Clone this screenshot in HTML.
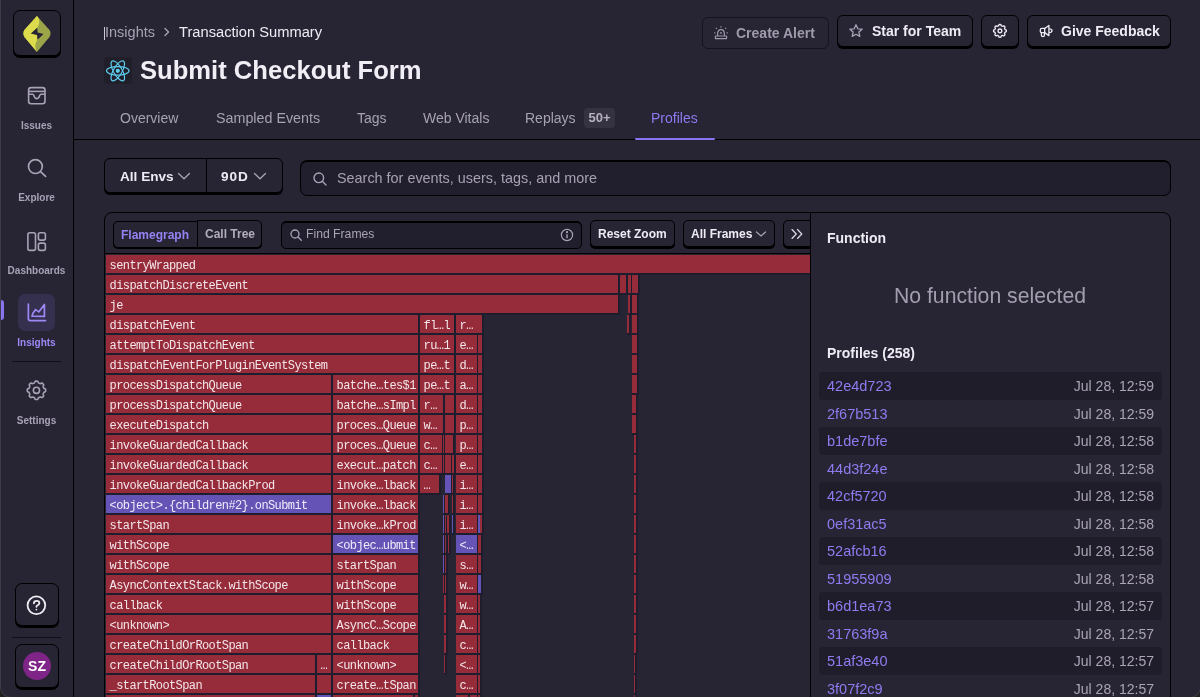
<!DOCTYPE html>
<html><head><meta charset="utf-8">
<style>
*{box-sizing:border-box;margin:0;padding:0}
html,body{width:1200px;height:697px;overflow:hidden;background:#1f221e}
body{font-family:"Liberation Sans",sans-serif;color:#efebf4;position:relative}
#win{position:absolute;left:0;top:0;width:1201px;height:698px;background:#272433;border-radius:0 0 11px 11px;overflow:hidden;will-change:transform}
#wedge{position:absolute;left:0;top:0;width:1201px;height:698px;border-radius:0 0 11px 11px;border:1px solid #3d3b48;border-top:0;pointer-events:none;z-index:50}
.a{position:absolute;white-space:nowrap}
#sideline{position:absolute;left:73px;top:0;width:1px;height:697px;background:#000}
.hline{position:absolute;left:74px;top:139px;width:1126px;height:1px;background:#000}
.sbtn{position:absolute;border:1px solid #000;border-radius:7px;background:#272433;box-shadow:0 2px 0 #000}
.lbl{position:absolute;font-weight:bold;font-size:10px;color:#a8a2b7;text-align:center;width:73px;left:0;white-space:nowrap;line-height:12px}
.tab{position:absolute;top:110px;font-size:14px;line-height:16px;color:#a7a1b4;white-space:nowrap}
.hbtn{position:absolute;border:1px solid #000;border-radius:6px;background:#272433;box-shadow:0 2px 0 #000;font-weight:bold;font-size:14px;line-height:16px;color:#efebf4;white-space:nowrap}
.tbtn{position:absolute;border:1px solid #000;border-radius:5px;background:#272433;box-shadow:0 2px 0 #000;font-weight:bold;font-size:12px;line-height:14px;color:#efebf4;white-space:nowrap}
#flame{position:absolute;left:0;top:0;width:1200px;height:697px;overflow:hidden;clip-path:inset(254px 390px 0 105px)}
.fr,.fp{position:absolute;height:20px;background:#1e1d2e;background-clip:border-box;overflow:hidden}
.fr{font-family:"Liberation Mono",monospace;font-size:12px;letter-spacing:-0.6px;line-height:18px;color:#f3e6ea}
.fp{font-family:"Liberation Mono",monospace;font-size:12px;letter-spacing:-0.6px;line-height:18px;color:#f0ecfb}
.fr::before,.fp::before{content:"";position:absolute;left:0;top:0;right:1.5px;bottom:2px;background:#962b39;z-index:0}
.fp::before{background:#6553b5}
.fl{position:relative;z-index:1;padding-left:3.6px;top:2px}
.prow{position:absolute;left:819px;width:343px;height:27.5px;border-radius:4px}
.prow.alt{background:#201d2b}
.pid{position:absolute;left:8px;top:6px;font-size:14.5px;line-height:16px;color:#8e7cf0}
.pdt{position:absolute;right:8px;top:6px;font-size:14px;line-height:16px;color:#aaa4b6}
</style></head><body>
<div id="win">
  <!-- SIDEBAR -->
  <div id="sideline"></div>
  <div class="sbtn" style="left:13px;top:10px;width:48px;height:46px"></div>
  <svg class="a" style="left:20px;top:14px" width="34" height="40" viewBox="0 0 34 40">
    <path d="M16.9 2 L29.3 15.8 Q31.8 19.5 29.3 23.2 L16.9 37.9 L4.6 23.2 Q2.1 19.5 4.6 15.8 Z" fill="#9ca548"/>
    <path d="M16.9 2 L4.6 15.8 Q2.1 19.5 4.6 23.2 L16.9 37.9 C15.4 35.8 14.9 31.5 15.6 29.5 C16 28 16.8 26.8 17.5 25.8 L17.1 21 L10.9 19.5 L17.2 13.8 C18.6 11.6 19.4 9.2 19.2 6.4 C19 4.8 18.2 3.4 16.9 2 Z" fill="#dcdb4c"/>
    <path d="M10.9 19.5 L17.2 13.8 L17.6 18.6 L23.5 20.1 L17.5 25.8 L17.1 21 Z" fill="#272433"/>
  </svg>
  <!-- issues -->
  <svg class="a" style="left:26px;top:85px" width="22" height="22" viewBox="0 0 22 22" fill="none" stroke="#a8a2b7" stroke-width="1.6">
    <rect x="2.6" y="2.6" width="16.4" height="16.2" rx="2.5"/>
    <path d="M2.6 6.4 H19"/>
    <path d="M2.6 9.2 H6.5 Q7.5 9.3 8 10.8 Q8.8 13.6 10.8 13.6 Q12.8 13.6 13.6 10.8 Q14.1 9.3 15.1 9.2 H19"/>
  </svg>
  <div class="lbl" style="top:120px">Issues</div>
  <!-- explore -->
  <svg class="a" style="left:25px;top:156px" width="24" height="24" viewBox="0 0 24 24" fill="none" stroke="#a8a2b7" stroke-width="1.7" stroke-linecap="round">
    <circle cx="10.4" cy="10.6" r="6.9"/>
    <path d="M15.5 15.7 L20.6 20.4"/>
  </svg>
  <div class="lbl" style="top:192px">Explore</div>
  <!-- dashboards -->
  <svg class="a" style="left:25px;top:230px" width="24" height="24" viewBox="0 0 24 24" fill="none" stroke="#a8a2b7" stroke-width="1.6">
    <rect x="2.9" y="2.8" width="7.6" height="17.6" rx="1.8"/>
    <rect x="13.4" y="2.8" width="7" height="7.3" rx="1.8"/>
    <rect x="13.4" y="13.1" width="7" height="7.3" rx="1.8"/>
  </svg>
  <div class="lbl" style="top:265px">Dashboards</div>
  <!-- insights active -->
  <div class="a" style="left:0;top:300px;width:4px;height:20px;background:#8a73f0;border-radius:0 3px 3px 0"></div>
  <div class="a" style="left:18px;top:294px;width:37px;height:37px;background:#36304f;border-radius:7px"></div>
  <svg class="a" style="left:25px;top:301px" width="24" height="24" viewBox="0 0 24 24" fill="none" stroke="#9d88f5" stroke-width="1.7" stroke-linejoin="round" stroke-linecap="round">
    <path d="M3.35 3 V17.4 Q3.35 19.6 5.55 19.6 H20.5"/>
    <path d="M7 15.2 L7.9 12.2 L10.6 8.6 L13.8 10.9 L19.4 3.4 V15.4 Z"/>
  </svg>
  <div class="lbl" style="top:337px;color:#9d88f5">Insights</div>
  <div class="a" style="left:12px;top:361px;width:49px;height:1px;background:#120c22"></div>
  <!-- settings -->
  <svg class="a" style="left:25px;top:379px" width="24" height="24" viewBox="0 0 24 24" fill="none" stroke="#a8a2b7" stroke-width="1.6" stroke-linejoin="round">
    <path d="M11.45 2.10 L11.69 2.10 L11.93 2.12 L12.17 2.15 L12.41 2.19 L12.64 2.29 L12.85 2.48 L13.02 2.84 L13.15 3.29 L13.29 3.64 L13.45 3.85 L13.62 3.97 L13.80 4.06 L13.99 4.13 L14.17 4.20 L14.36 4.28 L14.54 4.36 L14.72 4.44 L14.91 4.51 L15.10 4.58 L15.31 4.62 L15.56 4.59 L15.91 4.43 L16.33 4.21 L16.70 4.08 L16.98 4.09 L17.21 4.18 L17.41 4.32 L17.60 4.47 L17.78 4.63 L17.96 4.79 L18.12 4.97 L18.28 5.15 L18.43 5.34 L18.57 5.54 L18.66 5.77 L18.67 6.05 L18.54 6.42 L18.32 6.84 L18.16 7.19 L18.13 7.44 L18.17 7.65 L18.24 7.84 L18.31 8.03 L18.39 8.21 L18.47 8.39 L18.55 8.58 L18.62 8.76 L18.69 8.95 L18.78 9.13 L18.90 9.30 L19.11 9.46 L19.46 9.60 L19.91 9.73 L20.27 9.90 L20.46 10.11 L20.56 10.34 L20.60 10.58 L20.63 10.82 L20.65 11.06 L20.65 11.30 L20.65 11.54 L20.63 11.78 L20.60 12.02 L20.56 12.26 L20.46 12.49 L20.27 12.70 L19.91 12.87 L19.46 13.00 L19.11 13.14 L18.90 13.30 L18.78 13.47 L18.69 13.65 L18.62 13.84 L18.55 14.02 L18.47 14.21 L18.39 14.39 L18.31 14.57 L18.24 14.76 L18.17 14.95 L18.13 15.16 L18.16 15.41 L18.32 15.76 L18.54 16.18 L18.67 16.55 L18.66 16.83 L18.57 17.06 L18.43 17.26 L18.28 17.45 L18.12 17.63 L17.96 17.81 L17.78 17.97 L17.60 18.13 L17.41 18.28 L17.21 18.42 L16.98 18.51 L16.70 18.52 L16.33 18.39 L15.91 18.17 L15.56 18.01 L15.31 17.98 L15.10 18.02 L14.91 18.09 L14.72 18.16 L14.54 18.24 L14.36 18.32 L14.17 18.40 L13.99 18.47 L13.80 18.54 L13.62 18.63 L13.45 18.75 L13.29 18.96 L13.15 19.31 L13.02 19.76 L12.85 20.12 L12.64 20.31 L12.41 20.41 L12.17 20.45 L11.93 20.48 L11.69 20.50 L11.45 20.50 L11.21 20.50 L10.97 20.48 L10.73 20.45 L10.49 20.41 L10.26 20.31 L10.05 20.12 L9.88 19.76 L9.75 19.31 L9.61 18.96 L9.45 18.75 L9.28 18.63 L9.10 18.54 L8.91 18.47 L8.73 18.40 L8.54 18.32 L8.36 18.24 L8.18 18.16 L7.99 18.09 L7.80 18.02 L7.59 17.98 L7.34 18.01 L6.99 18.17 L6.57 18.39 L6.20 18.52 L5.92 18.51 L5.69 18.42 L5.49 18.28 L5.30 18.13 L5.12 17.97 L4.94 17.81 L4.78 17.63 L4.62 17.45 L4.47 17.26 L4.33 17.06 L4.24 16.83 L4.23 16.55 L4.36 16.18 L4.58 15.76 L4.74 15.41 L4.77 15.16 L4.73 14.95 L4.66 14.76 L4.59 14.57 L4.51 14.39 L4.43 14.21 L4.35 14.02 L4.28 13.84 L4.21 13.65 L4.12 13.47 L4.00 13.30 L3.79 13.14 L3.44 13.00 L2.99 12.87 L2.63 12.70 L2.44 12.49 L2.34 12.26 L2.30 12.02 L2.27 11.78 L2.25 11.54 L2.25 11.30 L2.25 11.06 L2.27 10.82 L2.30 10.58 L2.34 10.34 L2.44 10.11 L2.63 9.90 L2.99 9.73 L3.44 9.60 L3.79 9.46 L4.00 9.30 L4.12 9.13 L4.21 8.95 L4.28 8.76 L4.35 8.58 L4.43 8.39 L4.51 8.21 L4.59 8.03 L4.66 7.84 L4.73 7.65 L4.77 7.44 L4.74 7.19 L4.58 6.84 L4.36 6.42 L4.23 6.05 L4.24 5.77 L4.33 5.54 L4.47 5.34 L4.62 5.15 L4.78 4.97 L4.94 4.79 L5.12 4.63 L5.30 4.47 L5.49 4.32 L5.69 4.18 L5.92 4.09 L6.20 4.08 L6.57 4.21 L6.99 4.43 L7.34 4.59 L7.59 4.62 L7.80 4.58 L7.99 4.51 L8.18 4.44 L8.36 4.36 L8.54 4.28 L8.73 4.20 L8.91 4.13 L9.10 4.06 L9.28 3.97 L9.45 3.85 L9.61 3.64 L9.75 3.29 L9.88 2.84 L10.05 2.48 L10.26 2.29 L10.49 2.19 L10.73 2.15 L10.97 2.12 L11.21 2.10 Z"/>
    <circle cx="11.45" cy="11.3" r="3.1"/>
  </svg>
  <div class="lbl" style="top:415px">Settings</div>
  <!-- help -->
  <div class="sbtn" style="left:15px;top:583px;width:44px;height:43px"></div>
  <svg class="a" style="left:25px;top:594px" width="24" height="24" viewBox="0 0 24 24" fill="none" stroke="#f0ecf4" stroke-width="1.8" stroke-linecap="round">
    <circle cx="11.4" cy="11.3" r="8.85"/>
    <path d="M8.9 9.3 Q8.9 6.8 11.6 6.8 Q14.4 6.8 14.4 9 Q14.4 10.4 12.7 11.2 Q11.4 11.8 11.4 12.8"/>
    <circle cx="11.4" cy="15.6" r="0.9" fill="#f0ecf4" stroke="none"/>
  </svg>
  <div class="a" style="left:12px;top:637px;width:49px;height:1px;background:#120c22"></div>
  <div class="sbtn" style="left:15px;top:644px;width:44px;height:44px"></div>
  <div class="a" style="left:23px;top:652px;width:28px;height:28px;border-radius:50%;background:#7f2588;color:#fff;font-weight:bold;font-size:14px;line-height:29px;text-align:center">SZ</div>

  <!-- HEADER -->
  <div class="a" style="left:104px;top:27px;width:1px;height:13px;background:#cfc9d6"></div>
  <div class="a" style="left:105px;top:24px;font-size:14.5px;line-height:17px;color:#a7a1b4">Insights</div>
  <svg class="a" style="left:161px;top:25px" width="12" height="14" viewBox="0 0 12 14" fill="none" stroke="#a7a1b4" stroke-width="1.4" stroke-linecap="round" stroke-linejoin="round"><path d="M4 3.5 L7.5 7 L4 10.5"/></svg>
  <div class="a" style="left:179px;top:24px;font-size:14.7px;line-height:17px;color:#efebf4">Transaction Summary</div>
  <div class="a" style="left:104px;top:57px;width:28px;height:27px;background:#201f29;border-radius:3px"></div>
  <svg class="a" style="left:104px;top:57px" width="28" height="27" viewBox="0 0 28 27" fill="none" stroke="#5dcdf0" stroke-width="1.15">
    <ellipse cx="13.8" cy="13.85" rx="11.3" ry="4.3"/>
    <ellipse cx="13.8" cy="13.85" rx="11.3" ry="4.3" transform="rotate(60 13.8 13.85)"/>
    <ellipse cx="13.8" cy="13.85" rx="11.3" ry="4.3" transform="rotate(120 13.8 13.85)"/>
    <circle cx="13.8" cy="13.85" r="2.1" fill="#5dcdf0" stroke="none"/>
  </svg>
  <div class="a" style="left:140px;top:55px;font-size:25.6px;line-height:30px;font-weight:bold;color:#f2eef6">Submit Checkout Form</div>

  <!-- header buttons -->
  <div class="a" style="left:702px;top:17px;width:127px;height:32px;border:1px solid #16131e;border-radius:6px"></div>
  <svg class="a" style="left:713px;top:25px" width="16" height="16" viewBox="0 0 16 16" fill="none" stroke="#a09aad" stroke-width="1.2">
    <path d="M4.6 10.8 V9.3 Q4.6 4.7 8 4.7 Q11.4 4.7 11.4 9.3 V10.8"/>
    <rect x="2.4" y="11" width="11.2" height="2.6" rx="0.3"/>
    <circle cx="8" cy="7.9" r="0.9" fill="#a09aad" stroke="none"/>
    <path d="M8 1.3 V2.5 M3 2.9 L3.7 3.7 M13 2.9 L12.3 3.7 M1.2 7.9 H2.4 M13.6 7.9 H14.8" stroke-width="1.3"/>
  </svg>
  <div class="a" style="left:736px;top:25px;font-size:14px;line-height:16px;font-weight:bold;color:#a09aad">Create Alert</div>

  <div class="hbtn" style="left:837px;top:15px;width:136px;height:32px"></div>
  <svg class="a" style="left:848px;top:23px" width="16" height="16" viewBox="0 0 16 16" fill="none" stroke="#a8a2b7" stroke-width="1.3" stroke-linejoin="round">
    <path d="M8 1.8 L9.8 5.8 L14.1 6.2 L10.9 9.1 L11.8 13.4 L8 11.2 L4.2 13.4 L5.1 9.1 L1.9 6.2 L6.2 5.8 Z"/>
  </svg>
  <div class="a" style="left:872px;top:23px;font-size:14px;line-height:16px;font-weight:bold;color:#efebf4">Star for Team</div>

  <div class="hbtn" style="left:981px;top:15px;width:38px;height:32px"></div>
  <svg class="a" style="left:990px;top:21px" width="20" height="20" viewBox="0 0 20 20" fill="none" stroke="#efebf4" stroke-width="1.35" stroke-linejoin="round">
    <path d="M9.94 3.45 L10.19 3.46 L10.44 3.48 L10.69 3.55 L10.91 3.73 L11.07 4.16 L11.20 4.59 L11.37 4.79 L11.55 4.89 L11.74 4.97 L11.93 5.05 L12.12 5.13 L12.31 5.21 L12.51 5.27 L12.76 5.24 L13.16 5.03 L13.58 4.84 L13.87 4.87 L14.09 4.99 L14.28 5.15 L14.47 5.32 L14.64 5.51 L14.80 5.70 L14.92 5.92 L14.95 6.21 L14.76 6.63 L14.55 7.03 L14.52 7.28 L14.58 7.48 L14.66 7.67 L14.74 7.86 L14.82 8.05 L14.90 8.24 L15.00 8.42 L15.20 8.59 L15.63 8.72 L16.06 8.88 L16.24 9.10 L16.31 9.35 L16.33 9.60 L16.34 9.85 L16.33 10.10 L16.31 10.35 L16.24 10.60 L16.06 10.82 L15.63 10.98 L15.20 11.11 L15.00 11.28 L14.90 11.46 L14.82 11.65 L14.74 11.84 L14.66 12.03 L14.58 12.22 L14.52 12.42 L14.55 12.67 L14.76 13.07 L14.95 13.49 L14.92 13.78 L14.80 14.00 L14.64 14.19 L14.47 14.38 L14.28 14.55 L14.09 14.71 L13.87 14.83 L13.58 14.86 L13.16 14.67 L12.76 14.46 L12.51 14.43 L12.31 14.49 L12.12 14.57 L11.93 14.65 L11.74 14.73 L11.55 14.81 L11.37 14.91 L11.20 15.11 L11.07 15.54 L10.91 15.97 L10.69 16.15 L10.44 16.22 L10.19 16.24 L9.94 16.25 L9.69 16.24 L9.44 16.22 L9.19 16.15 L8.97 15.97 L8.81 15.54 L8.68 15.11 L8.51 14.91 L8.33 14.81 L8.14 14.73 L7.95 14.65 L7.76 14.57 L7.57 14.49 L7.37 14.43 L7.12 14.46 L6.72 14.67 L6.30 14.86 L6.01 14.83 L5.79 14.71 L5.60 14.55 L5.41 14.38 L5.24 14.19 L5.08 14.00 L4.96 13.78 L4.93 13.49 L5.12 13.07 L5.33 12.67 L5.36 12.42 L5.30 12.22 L5.22 12.03 L5.14 11.84 L5.06 11.65 L4.98 11.46 L4.88 11.28 L4.68 11.11 L4.25 10.98 L3.82 10.82 L3.64 10.60 L3.57 10.35 L3.55 10.10 L3.54 9.85 L3.55 9.60 L3.57 9.35 L3.64 9.10 L3.82 8.88 L4.25 8.72 L4.68 8.59 L4.88 8.42 L4.98 8.24 L5.06 8.05 L5.14 7.86 L5.22 7.67 L5.30 7.48 L5.36 7.28 L5.33 7.03 L5.12 6.63 L4.93 6.21 L4.96 5.92 L5.08 5.70 L5.24 5.51 L5.41 5.32 L5.60 5.15 L5.79 4.99 L6.01 4.87 L6.30 4.84 L6.72 5.03 L7.12 5.24 L7.37 5.27 L7.57 5.21 L7.76 5.13 L7.95 5.05 L8.14 4.97 L8.33 4.89 L8.51 4.79 L8.68 4.59 L8.81 4.16 L8.97 3.73 L9.19 3.55 L9.44 3.48 L9.69 3.46 Z"/>
    <circle cx="9.94" cy="9.85" r="1.9"/>
  </svg>

  <div class="hbtn" style="left:1027px;top:15px;width:144px;height:32px"></div>
  <svg class="a" style="left:1039px;top:23px" width="16" height="16" viewBox="0 0 16 16" fill="none" stroke="#efebf4" stroke-width="1.3" stroke-linejoin="round">
    <path d="M2.8 5.4 H5.7 V9.6 H2.8 Q1.3 9.6 1.3 8.1 V6.9 Q1.3 5.4 2.8 5.4 Z"/>
    <path d="M2.4 9.6 V12.3 Q2.4 13.7 3.9 13.7 Q5.4 13.7 5.4 12.3 V9.6"/>
    <path d="M5.7 5.5 L9.9 2.4 V12.6 L5.7 9.6"/>
    <path d="M10.2 5.9 Q13 6 13 7.8 Q13 9.6 10.2 9.7"/>
  </svg>
  <div class="a" style="left:1061px;top:23px;font-size:14px;line-height:16px;font-weight:bold;color:#efebf4">Give Feedback</div>

  <!-- TABS -->
  <div class="tab" style="left:120px">Overview</div>
  <div class="tab" style="left:216px;font-size:14.3px">Sampled Events</div>
  <div class="tab" style="left:357px">Tags</div>
  <div class="tab" style="left:423px">Web Vitals</div>
  <div class="tab" style="left:525px">Replays</div>
  <div class="a" style="left:584px;top:108px;width:31px;height:20px;background:#353342;border-radius:4px;font-weight:bold;font-size:13px;line-height:20px;color:#b7b1c3;text-align:center">50+</div>
  <div class="tab" style="left:651px;color:#8f7af2">Profiles</div>
  <div class="hline"></div>
  <div class="a" style="left:635px;top:138px;width:80px;height:2px;background:#8a73f0;border-radius:1px"></div>

  <!-- FILTERS -->
  <div class="hbtn" style="left:104px;top:158px;width:179px;height:35px;box-shadow:0 2px 0 #000"></div>
  <div class="a" style="left:206px;top:159px;width:1px;height:34px;background:#000"></div>
  <div class="a" style="left:120px;top:169px;font-size:13.6px;line-height:16px;font-weight:bold;color:#efebf4">All Envs</div>
  <svg class="a" style="left:177px;top:170px" width="14" height="12" viewBox="0 0 14 12" fill="none" stroke="#a8a2b7" stroke-width="1.3" stroke-linecap="round"><path d="M1.5 3.5 L7 8.8 L12.5 3.5"/></svg>
  <div class="a" style="left:221px;top:169px;font-size:13.6px;line-height:16px;font-weight:bold;color:#efebf4;letter-spacing:1px">90D</div>
  <svg class="a" style="left:253px;top:170px" width="14" height="12" viewBox="0 0 14 12" fill="none" stroke="#a8a2b7" stroke-width="1.3" stroke-linecap="round"><path d="M1.5 3.5 L7 8.8 L12.5 3.5"/></svg>

  <div class="a" style="left:300px;top:160px;width:871px;height:36px;background:#211e2d;border:1px solid #000;border-radius:7px;box-shadow:inset 0 1px 0 #000"></div>
  <svg class="a" style="left:312px;top:171px" width="16" height="16" viewBox="0 0 16 16" fill="none" stroke="#a8a2b7" stroke-width="1.4" stroke-linecap="round"><circle cx="6.8" cy="6.8" r="4.8"/><path d="M10.3 10.3 L14 14"/></svg>
  <div class="a" style="left:337px;top:170px;font-size:14.4px;line-height:17px;color:#a7a1b4">Search for events, users, tags, and more</div>

  <!-- PANEL -->
  <div class="a" style="left:104px;top:212px;width:1067px;height:500px;border:1px solid #000;border-radius:8px"></div>
  <div class="a" style="left:810px;top:213px;width:1px;height:490px;background:#000"></div>
  <div class="a" style="left:105px;top:253px;width:705px;height:1px;background:#000"></div>

  <div class="a" style="left:113px;top:221px;width:149px;height:27px;border:1px solid #000;border-radius:5px;background:#272433;box-shadow:0 1px 0 #000"></div>
  <div class="a" style="left:197px;top:220px;width:65px;height:28px;border:1px solid #000;border-top-width:1.5px;border-radius:0 5px 5px 0;background:#272433;box-shadow:0 1px 0 #000"></div>
  <div class="a" style="left:121px;top:228px;font-size:12px;line-height:14px;font-weight:bold;color:#9683f3">Flamegraph</div>
  <div class="a" style="left:205px;top:227px;font-size:12px;line-height:14px;font-weight:bold;color:#b2acbf">Call Tree</div>

  <div class="a" style="left:281px;top:221px;width:301px;height:28px;background:#211e2d;border:1px solid #000;border-radius:5px;box-shadow:inset 0 1px 0 #000"></div>
  <svg class="a" style="left:289px;top:228px" width="14" height="14" viewBox="0 0 14 14" fill="none" stroke="#a8a2b7" stroke-width="1.3" stroke-linecap="round"><circle cx="6" cy="6" r="4"/><path d="M9 9 L12.3 12.3"/></svg>
  <div class="a" style="left:306px;top:227px;font-size:12.2px;line-height:14px;color:#aaa4b6">Find Frames</div>
  <svg class="a" style="left:560px;top:228px" width="14" height="14" viewBox="0 0 14 14" fill="none" stroke="#a8a2b7" stroke-width="1.2"><circle cx="7" cy="7" r="5.6"/><path d="M7 6.2 V10.2" stroke-width="1.4"/><circle cx="7" cy="4.2" r="0.5" fill="#a8a2b7"/></svg>

  <div class="tbtn" style="left:590px;top:220px;width:85px;height:27px"></div>
  <div class="a" style="left:598px;top:227px;font-size:12px;line-height:14px;font-weight:bold;color:#efebf4">Reset Zoom</div>
  <div class="tbtn" style="left:683px;top:220px;width:92px;height:27px"></div>
  <div class="a" style="left:691px;top:227px;font-size:12px;line-height:14px;font-weight:bold;color:#efebf4">All Frames</div>
  <svg class="a" style="left:755px;top:228px" width="12" height="12" viewBox="0 0 12 12" fill="none" stroke="#a8a2b7" stroke-width="1.2" stroke-linecap="round"><path d="M1.5 4 L6 8 L10.5 4"/></svg>
  <div style="position:absolute;left:0;top:0;width:810px;height:260px;overflow:hidden">
    <div class="tbtn" style="left:783px;top:220px;width:40px;height:27px"></div>
    <svg class="a" style="left:789px;top:227px" width="16" height="14" viewBox="0 0 16 14" fill="none" stroke="#e6e2ec" stroke-width="1.15" stroke-linecap="round"><path d="M3 2.5 L7.3 7 L3 11.5 M8.5 2.5 L12.8 7 L8.5 11.5"/></svg>
  </div>

  <!-- FLAME -->
  <div id="flame">
<div class="fr" style="left:106px;top:255px;width:705.5px"><span class="fl">sentryWrapped</span></div>
<div class="fr" style="left:106px;top:275px;width:513.5px"><span class="fl">dispatchDiscreteEvent</span></div>
<div class="fr" style="left:620px;top:275px;width:7.5px"></div>
<div class="fr" style="left:628px;top:275px;width:4.5px"></div>
<div class="fr" style="left:632px;top:275px;width:7.5px"></div>
<div class="fr" style="left:106px;top:295px;width:513.5px"><span class="fl">je</span></div>
<div class="fr" style="left:628px;top:295px;width:3.5px"></div>
<div class="fr" style="left:632px;top:295px;width:6.5px"></div>
<div class="fr" style="left:106px;top:315px;width:313.5px"><span class="fl">dispatchEvent</span></div>
<div class="fr" style="left:420px;top:315px;width:35.5px"><span class="fl">fl…l</span></div>
<div class="fr" style="left:456px;top:315px;width:25.0px"><span class="fl">r…</span></div>
<div class="fr" style="left:480px;top:315px;width:3.5px"></div>
<div class="fr" style="left:627px;top:315px;width:3.5px"></div>
<div class="fr" style="left:632px;top:315px;width:6.5px"></div>
<div class="fr" style="left:106px;top:335px;width:313.5px"><span class="fl">attemptToDispatchEvent</span></div>
<div class="fr" style="left:420px;top:335px;width:35.5px"><span class="fl">ru…1</span></div>
<div class="fr" style="left:456px;top:335px;width:22.5px"><span class="fl">e…</span></div>
<div class="fr" style="left:478px;top:335px;width:5.5px"></div>
<div class="fr" style="left:632px;top:335px;width:6.5px"></div>
<div class="fr" style="left:106px;top:355px;width:313.5px"><span class="fl">dispatchEventForPluginEventSystem</span></div>
<div class="fr" style="left:420px;top:355px;width:35.5px"><span class="fl">pe…t</span></div>
<div class="fr" style="left:456px;top:355px;width:22.5px"><span class="fl">d…</span></div>
<div class="fr" style="left:478px;top:355px;width:5.5px"></div>
<div class="fr" style="left:632px;top:355px;width:6.5px"></div>
<div class="fr" style="left:106px;top:375px;width:226.5px"><span class="fl">processDispatchQueue</span></div>
<div class="fr" style="left:333px;top:375px;width:86.5px"><span class="fl">batche…tes$1</span></div>
<div class="fr" style="left:420px;top:375px;width:35.5px"><span class="fl">pe…t</span></div>
<div class="fr" style="left:456px;top:375px;width:22.5px"><span class="fl">a…</span></div>
<div class="fr" style="left:478px;top:375px;width:5.5px"></div>
<div class="fr" style="left:632px;top:375px;width:6.5px"></div>
<div class="fr" style="left:106px;top:395px;width:226.5px"><span class="fl">processDispatchQueue</span></div>
<div class="fr" style="left:333px;top:395px;width:86.5px"><span class="fl">batche…sImpl</span></div>
<div class="fr" style="left:420px;top:395px;width:24.5px"><span class="fl">r…</span></div>
<div class="fr" style="left:445px;top:395px;width:10.5px"></div>
<div class="fr" style="left:456px;top:395px;width:22.5px"><span class="fl">d…</span></div>
<div class="fr" style="left:478px;top:395px;width:5.5px"></div>
<div class="fr" style="left:632px;top:395px;width:3.0px"></div>
<div class="fr" style="left:634px;top:395px;width:3.5px"></div>
<div class="fr" style="left:106px;top:415px;width:226.5px"><span class="fl">executeDispatch</span></div>
<div class="fr" style="left:333px;top:415px;width:86.5px"><span class="fl">proces…Queue</span></div>
<div class="fr" style="left:420px;top:415px;width:24.5px"><span class="fl">w…</span></div>
<div class="fr" style="left:445px;top:415px;width:10.5px"></div>
<div class="fr" style="left:456px;top:415px;width:22.5px"><span class="fl">p…</span></div>
<div class="fr" style="left:478px;top:415px;width:5.5px"></div>
<div class="fr" style="left:632px;top:415px;width:3.0px"></div>
<div class="fr" style="left:634px;top:415px;width:3.5px"></div>
<div class="fr" style="left:106px;top:435px;width:226.5px"><span class="fl">invokeGuardedCallback</span></div>
<div class="fr" style="left:333px;top:435px;width:86.5px"><span class="fl">proces…Queue</span></div>
<div class="fr" style="left:420px;top:435px;width:23.5px"><span class="fl">c…</span></div>
<div class="fr" style="left:443px;top:435px;width:2.5px"></div>
<div class="fr" style="left:445px;top:435px;width:9.5px"></div>
<div class="fr" style="left:456px;top:435px;width:22.5px"><span class="fl">p…</span></div>
<div class="fr" style="left:478px;top:435px;width:5.5px"></div>
<div class="fr" style="left:634px;top:435px;width:3.5px"></div>
<div class="fr" style="left:106px;top:455px;width:226.5px"><span class="fl">invokeGuardedCallback</span></div>
<div class="fr" style="left:333px;top:455px;width:86.5px"><span class="fl">execut…patch</span></div>
<div class="fr" style="left:420px;top:455px;width:23.5px"><span class="fl">c…</span></div>
<div class="fr" style="left:443px;top:455px;width:2.5px"></div>
<div class="fr" style="left:445px;top:455px;width:7.5px"></div>
<div class="fr" style="left:452px;top:455px;width:3.5px"></div>
<div class="fr" style="left:456px;top:455px;width:22.5px"><span class="fl">e…</span></div>
<div class="fr" style="left:478px;top:455px;width:5.5px"></div>
<div class="fr" style="left:634px;top:455px;width:3.5px"></div>
<div class="fr" style="left:106px;top:475px;width:226.5px"><span class="fl">invokeGuardedCallbackProd</span></div>
<div class="fr" style="left:333px;top:475px;width:86.5px"><span class="fl">invoke…lback</span></div>
<div class="fr" style="left:420px;top:475px;width:20.5px"><span class="fl">…</span></div>
<div class="fp" style="left:445px;top:475px;width:7.5px"></div>
<div class="fr" style="left:452px;top:475px;width:2.5px"></div>
<div class="fr" style="left:456px;top:475px;width:22.5px"><span class="fl">i…</span></div>
<div class="fr" style="left:478px;top:475px;width:5.5px"></div>
<div class="fr" style="left:634px;top:475px;width:3.5px"></div>
<div class="fp" style="left:106px;top:495px;width:226.5px"><span class="fl">&lt;object&gt;.{children#2}.onSubmit</span></div>
<div class="fr" style="left:333px;top:495px;width:86.5px"><span class="fl">invoke…lback</span></div>
<div class="fp" style="left:443px;top:495px;width:2.5px"></div>
<div class="fr" style="left:445px;top:495px;width:4.5px"></div>
<div class="fr" style="left:452px;top:495px;width:2.5px"></div>
<div class="fr" style="left:456px;top:495px;width:22.5px"><span class="fl">i…</span></div>
<div class="fr" style="left:478px;top:495px;width:5.5px"></div>
<div class="fr" style="left:634px;top:495px;width:3.5px"></div>
<div class="fr" style="left:106px;top:515px;width:226.5px"><span class="fl">startSpan</span></div>
<div class="fr" style="left:333px;top:515px;width:86.5px"><span class="fl">invoke…kProd</span></div>
<div class="fp" style="left:443px;top:515px;width:2.5px"></div>
<div class="fr" style="left:445px;top:515px;width:2.5px"></div>
<div class="fr" style="left:447px;top:515px;width:3.5px"></div>
<div class="fp" style="left:452px;top:515px;width:2.5px"></div>
<div class="fr" style="left:456px;top:515px;width:22.5px"><span class="fl">i…</span></div>
<div class="fp" style="left:478px;top:515px;width:3.5px"></div>
<div class="fr" style="left:480px;top:515px;width:3.5px"></div>
<div class="fr" style="left:634px;top:515px;width:3.5px"></div>
<div class="fr" style="left:106px;top:535px;width:226.5px"><span class="fl">withScope</span></div>
<div class="fp" style="left:333px;top:535px;width:86.5px"><span class="fl">&lt;objec…ubmit</span></div>
<div class="fp" style="left:443px;top:535px;width:2.5px"></div>
<div class="fr" style="left:445px;top:535px;width:2.5px"></div>
<div class="fr" style="left:447.5px;top:535px;width:3.0px"></div>
<div class="fp" style="left:456px;top:535px;width:22.5px"><span class="fl">&lt;…</span></div>
<div class="fr" style="left:478px;top:535px;width:4.5px"></div>
<div class="fr" style="left:634px;top:535px;width:3.5px"></div>
<div class="fr" style="left:106px;top:555px;width:226.5px"><span class="fl">withScope</span></div>
<div class="fr" style="left:333px;top:555px;width:86.5px"><span class="fl">startSpan</span></div>
<div class="fp" style="left:443px;top:555px;width:2.5px"></div>
<div class="fr" style="left:445px;top:555px;width:2.5px"></div>
<div class="fr" style="left:456px;top:555px;width:22.5px"><span class="fl">s…</span></div>
<div class="fr" style="left:478px;top:555px;width:4.5px"></div>
<div class="fr" style="left:634px;top:555px;width:3.5px"></div>
<div class="fr" style="left:106px;top:575px;width:226.5px"><span class="fl">AsyncContextStack.withScope</span></div>
<div class="fr" style="left:333px;top:575px;width:86.5px"><span class="fl">withScope</span></div>
<div class="fr" style="left:443px;top:575px;width:2.5px"></div>
<div class="fr" style="left:445px;top:575px;width:2.5px"></div>
<div class="fr" style="left:456px;top:575px;width:22.5px"><span class="fl">w…</span></div>
<div class="fp" style="left:478px;top:575px;width:4.5px"></div>
<div class="fr" style="left:634px;top:575px;width:3.5px"></div>
<div class="fr" style="left:106px;top:595px;width:226.5px"><span class="fl">callback</span></div>
<div class="fr" style="left:333px;top:595px;width:86.5px"><span class="fl">withScope</span></div>
<div class="fr" style="left:444px;top:595px;width:3.5px"></div>
<div class="fr" style="left:456px;top:595px;width:22.5px"><span class="fl">w…</span></div>
<div class="fr" style="left:478px;top:595px;width:3.5px"></div>
<div class="fr" style="left:634px;top:595px;width:3.5px"></div>
<div class="fr" style="left:106px;top:615px;width:226.5px"><span class="fl">&lt;unknown&gt;</span></div>
<div class="fr" style="left:333px;top:615px;width:86.5px"><span class="fl">AsyncC…Scope</span></div>
<div class="fr" style="left:444px;top:615px;width:3.5px"></div>
<div class="fr" style="left:456px;top:615px;width:22.5px"><span class="fl">A…</span></div>
<div class="fr" style="left:478px;top:615px;width:3.5px"></div>
<div class="fr" style="left:634px;top:615px;width:3.5px"></div>
<div class="fr" style="left:106px;top:635px;width:226.5px"><span class="fl">createChildOrRootSpan</span></div>
<div class="fr" style="left:333px;top:635px;width:86.5px"><span class="fl">callback</span></div>
<div class="fr" style="left:444px;top:635px;width:3.5px"></div>
<div class="fr" style="left:456px;top:635px;width:22.5px"><span class="fl">c…</span></div>
<div class="fr" style="left:478px;top:635px;width:3.5px"></div>
<div class="fr" style="left:634px;top:635px;width:3.5px"></div>
<div class="fr" style="left:106px;top:655px;width:210.5px"><span class="fl">createChildOrRootSpan</span></div>
<div class="fr" style="left:317px;top:655px;width:15.5px"><span class="fl">…</span></div>
<div class="fr" style="left:333px;top:655px;width:86.5px"><span class="fl">&lt;unknown&gt;</span></div>
<div class="fr" style="left:444px;top:655px;width:2.5px"></div>
<div class="fr" style="left:456px;top:655px;width:22.5px"><span class="fl">&lt;…</span></div>
<div class="fr" style="left:478px;top:655px;width:3.5px"></div>
<div class="fr" style="left:634px;top:655px;width:2.5px"></div>
<div class="fr" style="left:106px;top:675px;width:210.5px"><span class="fl">_startRootSpan</span></div>
<div class="fr" style="left:317px;top:675px;width:15.5px"></div>
<div class="fr" style="left:333px;top:675px;width:86.5px"><span class="fl">create…tSpan</span></div>
<div class="fr" style="left:456px;top:675px;width:22.5px"><span class="fl">c…</span></div>
<div class="fr" style="left:478px;top:675px;width:3.5px"></div>
<div class="fr" style="left:634px;top:675px;width:2.5px"></div>
<div class="fr" style="left:106px;top:695px;width:210.5px"></div>
<div class="fp" style="left:317px;top:695px;width:15.5px"></div>
<div class="fr" style="left:333px;top:695px;width:81.5px"></div>
<div class="fr" style="left:415px;top:695px;width:4.5px"></div>
<div class="fr" style="left:456px;top:695px;width:13.5px"></div>
<div class="fr" style="left:470px;top:695px;width:8.5px"></div>
<div class="fr" style="left:478px;top:695px;width:3.5px"></div>
<div class="fr" style="left:634px;top:695px;width:2.5px"></div>
  </div>

  <!-- FUNCTION PANEL -->
  <div class="a" style="left:827px;top:230px;font-size:14px;line-height:16px;font-weight:bold;color:#efebf4">Function</div>
  <div class="a" style="left:894px;top:284px;font-size:21.2px;line-height:24px;color:#a39db0">No function selected</div>
  <div class="a" style="left:827px;top:345px;font-size:14px;line-height:16px;font-weight:bold;color:#efebf4">Profiles (258)</div>
<div class="prow alt" style="top:372.0px"><div class="pid">42e4d723</div><div class="pdt">Jul 28, 12:59</div></div>
<div class="prow" style="top:399.5px"><div class="pid">2f67b513</div><div class="pdt">Jul 28, 12:59</div></div>
<div class="prow alt" style="top:427.0px"><div class="pid">b1de7bfe</div><div class="pdt">Jul 28, 12:58</div></div>
<div class="prow" style="top:454.5px"><div class="pid">44d3f24e</div><div class="pdt">Jul 28, 12:58</div></div>
<div class="prow alt" style="top:482.0px"><div class="pid">42cf5720</div><div class="pdt">Jul 28, 12:58</div></div>
<div class="prow" style="top:509.5px"><div class="pid">0ef31ac5</div><div class="pdt">Jul 28, 12:58</div></div>
<div class="prow alt" style="top:537.0px"><div class="pid">52afcb16</div><div class="pdt">Jul 28, 12:58</div></div>
<div class="prow" style="top:564.5px"><div class="pid">51955909</div><div class="pdt">Jul 28, 12:58</div></div>
<div class="prow alt" style="top:592.0px"><div class="pid">b6d1ea73</div><div class="pdt">Jul 28, 12:57</div></div>
<div class="prow" style="top:619.5px"><div class="pid">31763f9a</div><div class="pdt">Jul 28, 12:57</div></div>
<div class="prow alt" style="top:647.0px"><div class="pid">51af3e40</div><div class="pdt">Jul 28, 12:57</div></div>
<div class="prow" style="top:674.5px"><div class="pid">3f07f2c9</div><div class="pdt">Jul 28, 12:57</div></div>
  <div id="wedge"></div>
</div>
</body></html>
